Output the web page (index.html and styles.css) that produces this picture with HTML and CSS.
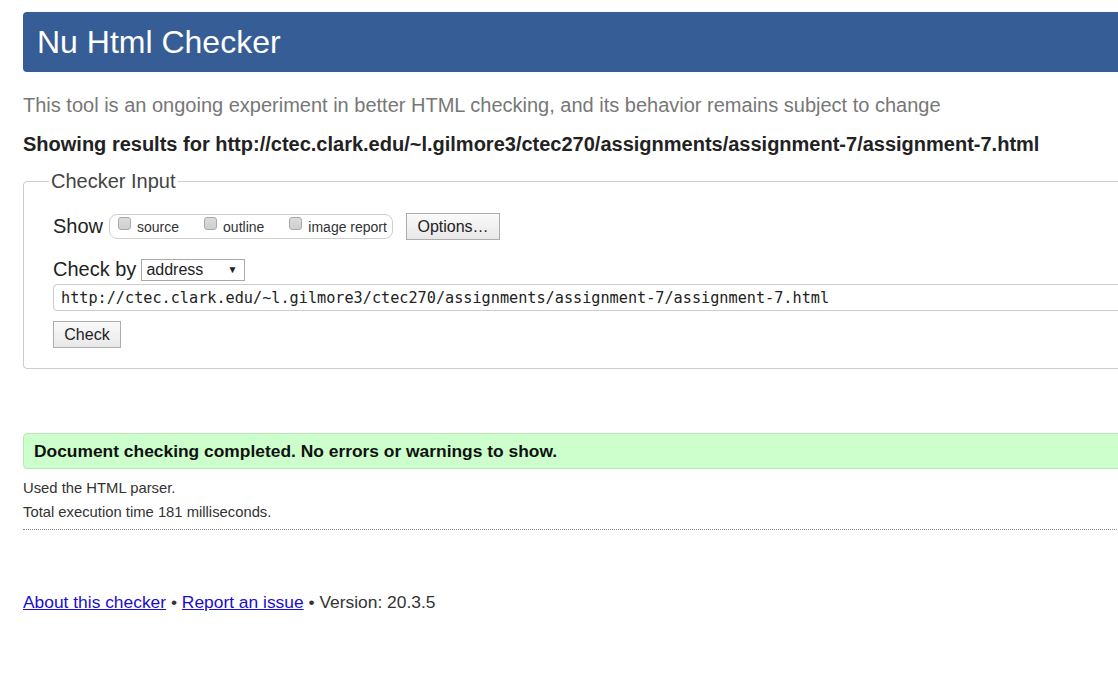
FILE: index.html
```html
<!DOCTYPE html>
<html lang="en">
<head>
<meta charset="utf-8">
<title>Nu Html Checker</title>
<link rel="stylesheet" href="styles.css">
</head>
<body>
<div class="page">
  <h1 class="banner">Nu Html Checker</h1>
  <p class="intro">This tool is an ongoing experiment in better HTML checking, and its behavior remains subject to change</p>
  <p class="showing">Showing results for http://ctec.clark.edu/~l.gilmore3/ctec270/assignments/assignment-7/assignment-7.html</p>

  <form class="checker">
    <fieldset class="inputbox">
      <legend class="legend">Checker Input</legend>
      <div class="row show-row">
        <span class="lbl">Show</span>
        <span class="opts">
          <label class="opt"><input type="checkbox" class="cb"><span>source</span></label>
          <label class="opt"><input type="checkbox" class="cb"><span>outline</span></label>
          <label class="opt"><input type="checkbox" class="cb"><span>image report</span></label>
        </span>
        <button type="button" class="btn btn-options">Options…</button>
      </div>
      <div class="row by-row">
        <span class="lbl">Check by</span>
        <span class="select-wrap">
          <select class="select"><option>address</option></select>
          <span class="arrow">▼</span>
        </span>
      </div>
      <div class="url-row">
        <input class="url" type="text" value="http://ctec.clark.edu/~l.gilmore3/ctec270/assignments/assignment-7/assignment-7.html">
      </div>
      <div class="submit-row">
        <button type="button" class="btn btn-check">Check</button>
      </div>
    </fieldset>
  </form>

  <div class="success">Document checking completed. No errors or warnings to show.</div>
  <div class="details">
    <p class="meta">Used the HTML parser.</p>
    <p class="meta">Total execution time 181 milliseconds.</p>
  </div>
  <hr class="sep">

  <p class="footer"><a href="#">About this checker</a> • <a href="#">Report an issue</a> • Version: 20.3.5</p>
</div>
</body>
</html>
```

FILE: styles.css
```css
html, body {
  margin: 0;
  padding: 0;
  overflow: hidden;
  background: #fff;
}

body {
  font-family: "Liberation Sans", Arial, sans-serif;
  color: #222;
}

.page {
  margin-left: 23px;
  width: 1120px;
  padding-top: 12px;
}

.banner {
  margin: 0;
  height: 60px;
  line-height: 60px;
  padding-left: 14px;
  background: #365d95;
  color: #fff;
  font-size: 32px;
  font-weight: normal;
  border-radius: 4px 0 0 4px;
}

.intro {
  margin: 21px 0 0;
  font-size: 20px;
  line-height: 24px;
  color: #777;
}

.showing {
  margin: 15px 0 0;
  font-size: 20px;
  line-height: 24px;
  font-weight: bold;
  color: #222;
}

.checker {
  margin: 14px 0 0;
}

.inputbox {
  margin: 0;
  padding: 21px 0 20px 29px;
  border: 1px solid #cccccc;
  border-radius: 4px 0 0 4px;
  min-width: 0;
}

.legend {
  margin-left: -4px;
  padding: 0 2px;
  font-size: 20px;
  line-height: 22px;
  color: #444;
}

.row {
  display: flex;
  align-items: center;
}

.lbl {
  font-size: 20px;
  color: #222;
}

.show-row {
  height: 27px;
}

.opts {
  display: flex;
  align-items: flex-start;
  height: 23px;
  margin-left: 6px;
  padding-left: 8px;
  width: 274px;
  border: 1px solid #cfcfcf;
  border-radius: 8px;
  box-sizing: content-box;
}

.opt {
  display: flex;
  align-items: flex-start;
  font-size: 14px;
  color: #333;
  margin-right: 25px;
}

.opt span {
  margin-top: 4px;
  line-height: 16px;
}

.opt:last-child {
  margin-right: 0;
}

.cb {
  appearance: none;
  -webkit-appearance: none;
  width: 13px;
  height: 13px;
  margin: 2px 6px 0 0;
  border: 1px solid #a9a9a9;
  border-radius: 3px;
  background: linear-gradient(#dcdcdc, #cfcfcf);
  box-sizing: border-box;
}

.btn {
  font-family: "Liberation Sans", Arial, sans-serif;
  font-size: 16px;
  color: #222;
  background: linear-gradient(#fafafa, #e8e8e8);
  border: 1px solid #adadad;
  border-radius: 0;
  padding: 0 10px;
  height: 27px;
}

.btn-options {
  margin-left: 13px;
  width: 94px;
}

.by-row {
  margin-top: 19px;
  height: 21px;
}

.select-wrap {
  position: relative;
  margin-left: 5px;
  display: inline-block;
}

.select {
  appearance: none;
  -webkit-appearance: none;
  width: 104px;
  height: 22px;
  border: 1px solid #a9a9a9;
  border-radius: 0;
  background: #fff;
  font-family: "Liberation Sans", Arial, sans-serif;
  font-size: 16px;
  color: #222;
  padding: 0 4px;
  display: block;
}

.arrow {
  position: absolute;
  right: 8px;
  top: 5px;
  font-size: 10px;
  color: #222;
  pointer-events: none;
}

.url-row {
  margin-top: 4px;
}

.url {
  display: block;
  width: 100%;
  box-sizing: border-box;
  height: 27px;
  border: 1px solid #cccccc;
  border-radius: 4px 0 0 4px;
  padding: 0 7px;
  font-family: "DejaVu Sans Mono", "Liberation Mono", monospace;
  font-size: 15.2px;
  color: #222;
}

.submit-row {
  margin-top: 10px;
}

.btn-check {
  width: 68px;
  padding: 0;
}

.success {
  margin-top: 64px;
  height: 36px;
  line-height: 34px;
  box-sizing: border-box;
  padding-left: 10px;
  background: #ccffcc;
  border: 1px solid #b9e5b9;
  border-radius: 4px 0 0 4px;
  font-size: 17.4px;
  font-weight: bold;
  color: #111;
}

.details {
  margin-top: 7px;
}

.meta {
  margin: 0;
  font-size: 14.8px;
  line-height: 24px;
  color: #333;
}

.sep {
  margin: 5px 0 0;
  border: 0;
  border-top: 1px dotted #888;
  height: 0;
}

.footer {
  margin: 61px 0 0;
  font-size: 17.4px;
  line-height: 22px;
  color: #333;
}

.footer a {
  color: #1a0dcc;
  text-decoration: underline;
}
```
